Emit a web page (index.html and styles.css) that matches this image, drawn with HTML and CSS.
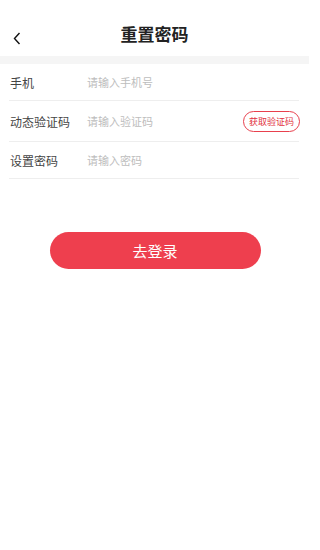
FILE: index.html
```html
<!DOCTYPE html>
<html lang="zh">
<head>
<meta charset="utf-8">
<title>重置密码</title>
<link rel="stylesheet" href="styles.css">
</head>
<body>
<div class="page">
<header class="topbar">
  <span class="back">
    <svg width="8" height="13" viewBox="0 0 8 13"><path d="M6.5 1 L1.5 6.5 L6.5 12" fill="none" stroke="#111" stroke-width="1.4"/></svg>
  </span>
  <h1 class="title">重置密码</h1>
</header>
<div class="band"></div>
<form class="form">
  <div class="row">
    <span class="label">手机</span>
    <span class="placeholder">请输入手机号</span>
  </div>
  <div class="row row-code">
    <span class="label">动态验证码</span>
    <span class="placeholder">请输入验证码</span>
    <span class="code-btn">获取验证码</span>
  </div>
  <div class="row">
    <span class="label">设置密码</span>
    <span class="placeholder">请输入密码</span>
  </div>
</form>
<div class="actions">
  <span class="login-btn">去登录</span>
</div>
</div>
</body>
</html>
```
FILE: styles.css
```css
* { box-sizing: border-box; }
body {
  margin: 0;
  background: #fff;
  font-family: "Noto Sans CJK SC", "Noto Sans", sans-serif;
  color: #333;
}
.page {
  width: 309px;
}
.topbar {
  position: relative;
  height: 56px;
  display: flex;
  align-items: center;
  justify-content: center;
}
.back {
  position: absolute;
  left: 13px;
  top: 32px;
  width: 8px;
  height: 13px;
  display: flex;
}
.title {
  margin: 12px 0 0 0;
  font-size: 17px;
  font-weight: 700;
  color: #222;
  line-height: 20px;
}
.band {
  height: 8px;
  background: #f5f5f5;
}
.form {
  margin: 0 10px 0 9px;
}
.row {
  display: flex;
  align-items: center;
  min-height: 37px;
  border-bottom: 1px solid #eeeeee;
  padding-left: 1px;
}
.row-code {
  min-height: 41px;
}
.label {
  width: 77px;
  font-size: 12px;
  color: #444;
}
.placeholder {
  flex: 1;
  font-size: 11px;
  color: #bdbdbd;
}
.code-btn {
  width: 57px;
  height: 21px;
  border: 1px solid #e8404d;
  border-radius: 11px;
  color: #e23240;
  font-size: 9px;
  display: flex;
  align-items: center;
  justify-content: center;
  margin-right: -1px;
  margin-top: 1px;
}
.actions {
  display: flex;
  justify-content: center;
  padding-top: 53px;
}
.login-btn {
  width: 211px;
  height: 37px;
  margin-left: 1px;
  border-radius: 19px;
  background: #ee3f4e;
  color: #fff;
  font-size: 15px;
  display: flex;
  align-items: center;
  justify-content: center;
}
```
